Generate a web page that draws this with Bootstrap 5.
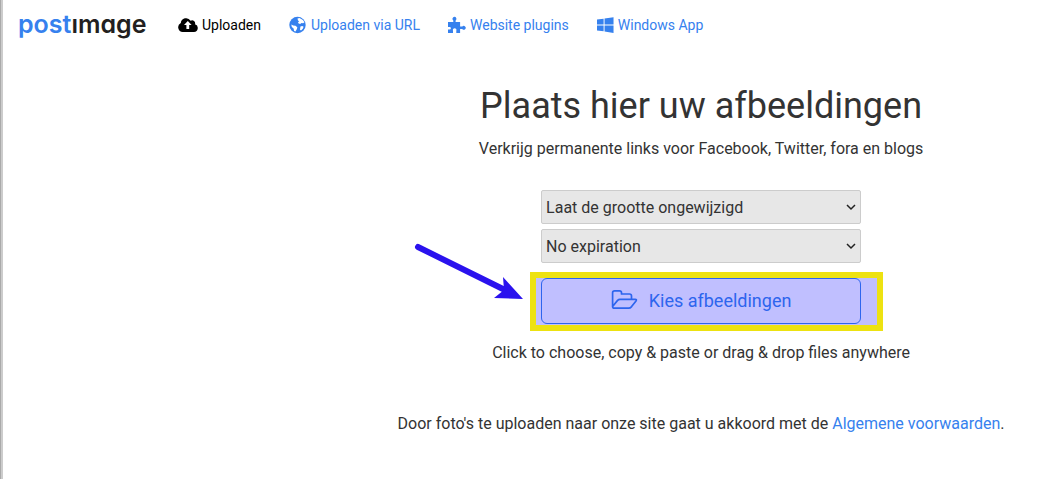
<!DOCTYPE html>
<html lang="nl">
<head>
<meta charset="utf-8">
<meta name="viewport" content="width=device-width, initial-scale=1">
<title>Postimage</title>
<link href="https://cdn.jsdelivr.net/npm/bootstrap@5.3.0/dist/css/bootstrap.min.css" rel="stylesheet">
<style>
  body { font-family: Roboto, "Liberation Sans", sans-serif; font-size: 16px; line-height: 24px; color: #333; background: #fff; }
  a { color: #3681ee; text-decoration: none; }
  .page { border-left: 1px solid #aaa; box-shadow: inset 2px 0 #ccc; }
  .topbar { height: 50px; padding-left: 17px; font-size: 14px; }
  .logo { width: 132px; margin-right: 14px; padding-bottom: 2px; font: 600 25px/30px Inter, Lato, sans-serif; font-feature-settings: "cv11"; color: #231f20; }
  .logo:hover { color: #231f20; }
  .logo span { color: #3681ee; }
  .topbar .nav-link { padding: 0 14px; height: 24px; color: #3681ee; }
  .topbar .nav-link.active { color: #000; }
  .upload { padding-left: 33%; padding-top: 36px; min-height: 429px; }
  .upload > * { margin-right: 3px; }
  h1 { font-size: 36px; line-height: 40px; font-weight: 400; margin-bottom: 11px; color: #333; }
  .panel { width: 320px; margin-top: 29px; }
  .pick { appearance: none; width: 100%; height: 34px; padding: 1px 4px 0; margin-bottom: 5px; border: 1px solid #ccc; border-radius: 2px; line-height: 20px; color: #333;
    background: #e7e7e7 url("data:image/svg+xml,%3Csvg xmlns='http://www.w3.org/2000/svg' width='10' height='8' viewBox='0 0 10 8'%3E%3Cpath d='M1 2l4 4 4-4' fill='none' stroke='%23222' stroke-width='1.5'/%3E%3C/svg%3E") no-repeat right 4px center; }
  .action { margin-top: 15px; }
  .choose { height: 46px; padding: 0 0 2px; border: 1px solid #2d65ee; border-radius: 6px; font-size: 18px; color: #2d65ee; background: #c0bfff; gap: 11px; }
  .choose:hover { color: #2d65ee; background: #b4b3ff; border-color: #2d65ee; }
  .marker { inset: -6px -22px -7px -11px; border: 6px solid #ede211; background: #c0bfff; }
  .arrow { left: -128px; top: -36px; }
  .hint { margin-top: 17px; }
  .terms { margin-top: 47px; }
</style>
</head>
<body>
<div class="page">
  <nav class="topbar d-flex align-items-center">
    <a class="logo" href="#" aria-label="postimage"><span>post</span>ımage</a>
    <div class="nav flex-nowrap text-nowrap">
      <a class="nav-link active d-flex align-items-center" href="#">
        <svg class="me-1" width="20" height="16" viewBox="0 0 20 16" fill="currentColor" aria-hidden="true"><path fill-rule="evenodd" d="M4.7 15A4.7 4.7 0 0 1 2.8 6.1 5.3 5.3 0 0 1 12.6 3.7 3 3 0 0 1 17 7.2 4 4 0 0 1 16 15zM8.4 12h2.8V8h2.4L9.8 4 6 8h2.4z"/></svg>Uploaden</a>
      <a class="nav-link d-flex align-items-center" href="#">
        <svg class="me-1" width="18" height="18" viewBox="0 0 18 18" aria-hidden="true"><circle cx="8.5" cy="9" r="8.2" fill="#3681ee"/><path fill="#fff" d="M8.5 2.6l2-.5 3.4 1.8 1.6 2.4-1.4 1-1.6-.4-1.3 1.1-1.6-.4-.6-1.4 1.2-1L9 4.4zM2.3 8.6l2 .8 2.2.3 1.8 1.6-.4 1.7-1.4 2.6-1.4-.5-.5-2.6-1.8-1.5zM11.4 10.6l1.8-.5 1.4.6-.8 2-1.8 1.8-1-.8z"/></svg>Uploaden via URL</a>
      <a class="nav-link d-flex align-items-center" href="#">
        <svg class="me-1" width="18" height="18" viewBox="0 0 18 18" fill="currentColor" aria-hidden="true"><path d="M0 6h5.3V4.4A2 2 0 0 1 6.4.8 2 2 0 0 1 7.6 4.4V6h4.5v4.6h2.2A1.9 1.9 0 1 1 14.3 13h-2.2v4H8.3v-2.2A1.8 1.8 0 1 0 5 14.8V17H0v-3.6l1.6.1a1.3 1.3 0 0 0 0-2.6L0 11z"/></svg>Website plugins</a>
      <a class="nav-link d-flex align-items-center" href="#">
        <svg class="me-1" width="17" height="18" viewBox="0 0 18 18" fill="currentColor" aria-hidden="true"><path d="M0 3.3l7-1v6.2H0zM8 2.1L17.5.7v7.8H8zM0 9.5h7v6.2l-7-1zM8 9.5h9.5v7.9L8 16z"/></svg>Windows App</a>
    </div>
  </nav>

  <main class="upload d-flex flex-column align-items-center text-center">
    <h1>Plaats hier uw afbeeldingen</h1>
    <p class="mb-0">Verkrijg permanente links voor Facebook, Twitter, fora en blogs</p>
    <form class="panel">
      <label class="visually-hidden" for="size">Afmeting</label>
      <select class="pick d-block" id="size"><option>Laat de grootte ongewijzigd</option></select>
      <label class="visually-hidden" for="expire">Expiration</label>
      <select class="pick d-block" id="expire"><option>No expiration</option></select>
      <div class="action position-relative">
        <div class="marker position-absolute"></div>
        <svg class="arrow position-absolute" width="112" height="60" viewBox="0 0 112 60" aria-hidden="true"><path d="M5 5L94 49" stroke="#2a12ee" stroke-width="6" stroke-linecap="round"/><path fill="#2a12ee" d="M110 57L90 35l1 13-10 8z"/></svg>
        <button type="button" class="choose btn w-100 position-relative d-flex align-items-center justify-content-center">
          <svg width="27" height="22" viewBox="0 0 27 22" fill="none" stroke="currentColor" stroke-width="1.7" stroke-linejoin="round" aria-hidden="true"><path d="M1.6 18V3.8Q1.6 1.8 3.6 1.8H8.5Q10.5 1.8 10.5 3.8V5H18.5Q20.5 5 20.5 7V10M1.6 17.5L6.6 11.4Q7.6 10.3 9 10.3H24.2Q26.1 10.3 25 11.9L20.6 17.6Q19.3 19.2 17.6 19.2H3.3Q1.6 19.2 1.6 17.5z"/></svg>
          Kies afbeeldingen</button>
      </div>
    </form>
    <p class="hint mb-0">Click to choose, copy &amp; paste or drag &amp; drop files anywhere</p>
    <p class="terms mb-0">Door foto's te uploaden naar onze site gaat u akkoord met de <a href="#">Algemene voorwaarden</a>.</p>
  </main>
</div>
<script src="https://cdn.jsdelivr.net/npm/bootstrap@5.3.0/dist/js/bootstrap.bundle.min.js"></script>
</body>
</html>
